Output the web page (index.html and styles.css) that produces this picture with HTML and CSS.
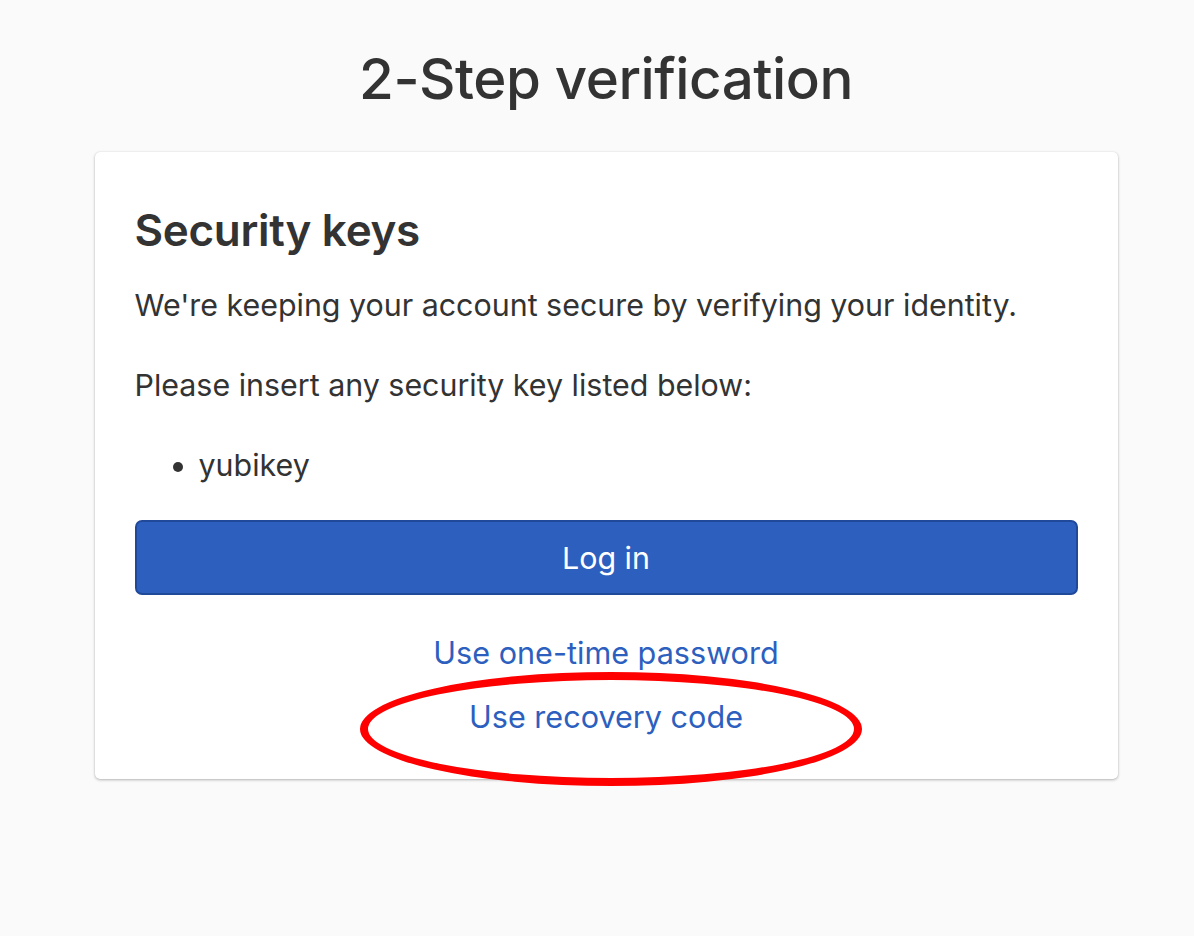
FILE: index.html
```html
<!DOCTYPE html>
<html lang="en">
<head>
<meta charset="utf-8">
<title>2-Step verification</title>
<link rel="stylesheet" href="styles.css">
</head>
<body>
<main class="page">
  <h1 class="title">2-Step verification</h1>
  <section class="card">
    <h2 class="card-title">Security keys</h2>
    <p class="text">We're keeping your account secure by verifying your identity.</p>
    <p class="text">Please insert any security key listed below:</p>
    <ul class="keys">
      <li>yubikey</li>
    </ul>
    <button class="btn" type="button">Log in</button>
    <div class="links">
      <a class="link" href="#">Use one-time password</a>
      <a class="link" href="#">Use recovery code</a>
    </div>
  </section>
</main>
<div class="circle" aria-hidden="true"></div>
</body>
</html>
```
FILE: styles.css
```css
* { box-sizing: border-box; }
html, body {
  margin: 0;
  background: #fafafa;
}
html { min-height: 100%; }
body {
  position: relative;
  min-height: 936px;
  font-family: Inter, "Noto Sans", "Liberation Sans", sans-serif;
  color: #333333;
}
.page {
  display: flex;
  flex-direction: column;
  align-items: center;
  padding-left: 18px;
  padding-top: 40px;
}
.title {
  margin: 0 0 34px;
  font-size: 56.5px;
  font-weight: 500;
  line-height: 78px;
  letter-spacing: -0.5px;
}
.card {
  width: 1023px;
  background: #ffffff;
  border-radius: 5px;
  box-shadow: 0 1px 3px rgba(0,0,0,0.28), 0 0 1px rgba(0,0,0,0.12);
  padding: 50px 40px 40px;
}
.card-title {
  margin: 0 0 25px;
  font-size: 44px;
  font-weight: 600;
  line-height: 56px;
  letter-spacing: -0.3px;
}
.text {
  margin: 0 0 36px;
  font-size: 30.4px;
  line-height: 44px;
}
.keys {
  margin: 0 0 33px;
  padding-left: 64px;
  font-size: 30.4px;
  line-height: 44px;
}
.btn {
  display: block;
  width: 100%;
  height: 75px;
  background: #2d5fbf;
  border: 2px solid #21499a;
  border-radius: 7px;
  color: #ffffff;
  font-family: inherit;
  font-size: 30.4px;
  font-weight: 400;
}
.links {
  display: flex;
  flex-direction: column;
  align-items: center;
  margin-top: 36px;
  gap: 20px;
}
.link {
  color: #2d5fbf;
  text-decoration: none;
  font-size: 30.6px;
  line-height: 44px;
}
/* red annotation ellipse drawn over the page */
.circle {
  position: absolute;
  left: 360px;
  top: 672px;
  width: 502px;
  height: 114px;
  border: 8px solid #ff0000;
  border-radius: 50%;
  pointer-events: none;
}
```
